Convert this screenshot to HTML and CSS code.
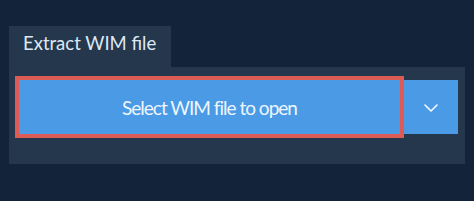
FILE: index.html
```html
<!DOCTYPE html>
<html>
<head>
<meta charset="utf-8">
<link rel="stylesheet" href="styles.css">
</head>
<body>
<div class="wrap">
  <div class="tab">Extract WIM file</div>
  <div class="panel">
    <button class="main-btn">Select WIM file to open</button>
    <button class="drop-btn" aria-label="More options">
      <svg width="14" height="8" viewBox="0 0 14 8"><path d="M1 1 L7 7 L13 1" fill="none" stroke="#ffffff" stroke-width="1.5" stroke-linecap="round" stroke-linejoin="round"/></svg>
    </button>
  </div>
</div>
</body>
</html>
```
FILE: styles.css
```css
html, body {
  margin: 0;
  padding: 0;
  background: #13243a;
  width: 474px;
  height: 201px;
  overflow: hidden;
  font-family: Lato, "Open Sans", "Liberation Sans", sans-serif;
}
.wrap {
  padding: 26px 9px 0 9px;
  display: flex;
  flex-direction: column;
  align-items: flex-start;
}
.tab {
  background: #24374c;
  color: #dde9f5;
  font-size: 18.5px;
  height: 34px;
  line-height: 34px;
  padding: 0 15px 7px 14px;
  width: 133px;
  white-space: nowrap;
}
.panel {
  background: #24374c;
  width: 456px;
  box-sizing: border-box;
  padding: 13px 7px 30px 10px;
  display: flex;
  gap: 4px;
}
.main-btn {
  width: 381px;
  height: 54px;
  border: none;
  outline: 4px solid #dc5b55;
  background: #4a9ae6;
  color: #eef6fd;
  font-family: inherit;
  font-size: 19px;
  letter-spacing: -1px;
  padding: 0;
  margin: 0;
}
.drop-btn {
  width: 54px;
  height: 54px;
  border: none;
  background: #4a9ae6;
  padding: 1px 0 0 0;
  margin: 0;
  display: flex;
  align-items: center;
  justify-content: center;
}
.drop-btn svg {
  display: block;
}
```
